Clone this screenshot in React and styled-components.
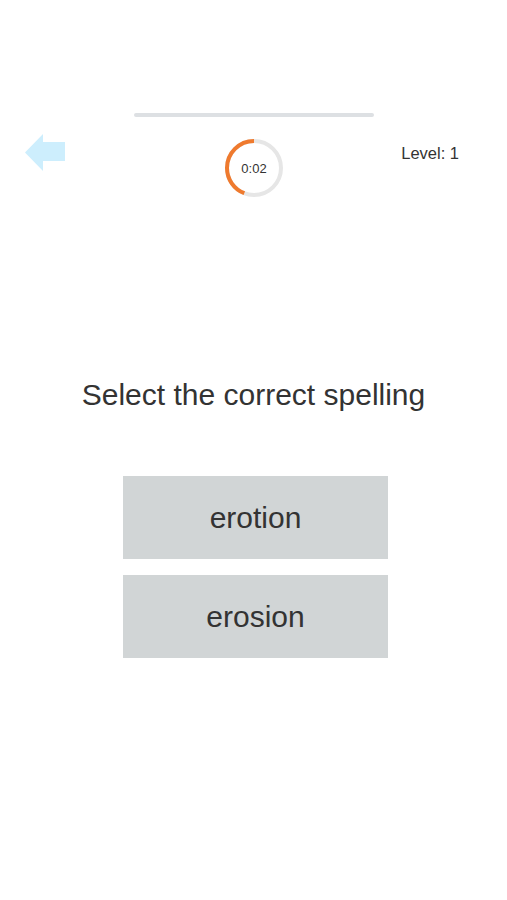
import React from "react";
import styled, { createGlobalStyle } from "styled-components";

const GlobalStyle = createGlobalStyle`
  html, body {
    margin: 0;
    padding: 0;
    background: #fff;
    font-family: "Liberation Sans", Arial, sans-serif;
  }
`;

const Page = styled.div`
  width: 507px;
  min-height: 900px;
  display: flex;
  flex-direction: column;
  align-items: center;
`;

const ProgressTrack = styled.div`
  margin-top: 113px;
  width: 240px;
  height: 4px;
  border-radius: 2px;
  background: #dde0e3;
`;

const TopRow = styled.div`
  width: 100%;
  display: grid;
  grid-template-columns: 1fr auto 1fr;
  align-items: start;
  margin-top: 17px;
`;

const BackButton = styled.button`
  justify-self: start;
  margin: 0 0 0 25px;
  padding: 0;
  border: 0;
  background: none;
  width: 40px;
  height: 37px;
  display: flex;
`;

const Timer = styled.div`
  position: relative;
  width: 60px;
  height: 60px;
  margin: 4px 0 0 1px;
`;

const TimerText = styled.span`
  position: absolute;
  inset: 0;
  display: flex;
  align-items: center;
  justify-content: center;
  font-size: 13px;
  color: #333;
`;

const Level = styled.div`
  justify-self: end;
  margin: 10px 48px 0 0;
  font-size: 16.5px;
  color: #333;
`;

const Prompt = styled.h1`
  margin: 180px 0 0;
  font-weight: normal;
  font-size: 30px;
  color: #333;
`;

const Options = styled.div`
  margin: 64px 0 0 4px;
  display: flex;
  flex-direction: column;
  gap: 16px;
`;

const Option = styled.button`
  width: 265px;
  height: 83px;
  border: 0;
  background: #d1d5d6;
  font-family: inherit;
  font-size: 30px;
  color: #333;
  cursor: pointer;
`;

const R = 27;
const C = 2 * Math.PI * R;

function App() {
  const progress = 0.44;
  return (
    <Page>
      <GlobalStyle />
      <ProgressTrack />
      <TopRow>
        <BackButton aria-label="back">
          <svg width="40" height="37" viewBox="0 0 40 37">
            <path d="M0 18.5 L18 0 L18 8 L40 8 L40 27 L18 27 L18 37 Z" fill="#cdeefd" />
          </svg>
        </BackButton>
        <Timer>
          <svg width="60" height="60" viewBox="0 0 60 60">
            <circle cx="30" cy="30" r={R} fill="none" stroke="#e6e6e6" strokeWidth="4" />
            <circle
              cx="30"
              cy="30"
              r={R}
              fill="none"
              stroke="#ef7a2e"
              strokeWidth="4"
              strokeDasharray={`${C * progress} ${C}`}
              transform="rotate(-90 30 30) scale(1 -1) translate(0 -60)"
            />
          </svg>
          <TimerText>0:02</TimerText>
        </Timer>
        <Level>Level: 1</Level>
      </TopRow>
      <Prompt>Select the correct spelling</Prompt>
      <Options>
        <Option>erotion</Option>
        <Option>erosion</Option>
      </Options>
    </Page>
  );
}

export default App;
